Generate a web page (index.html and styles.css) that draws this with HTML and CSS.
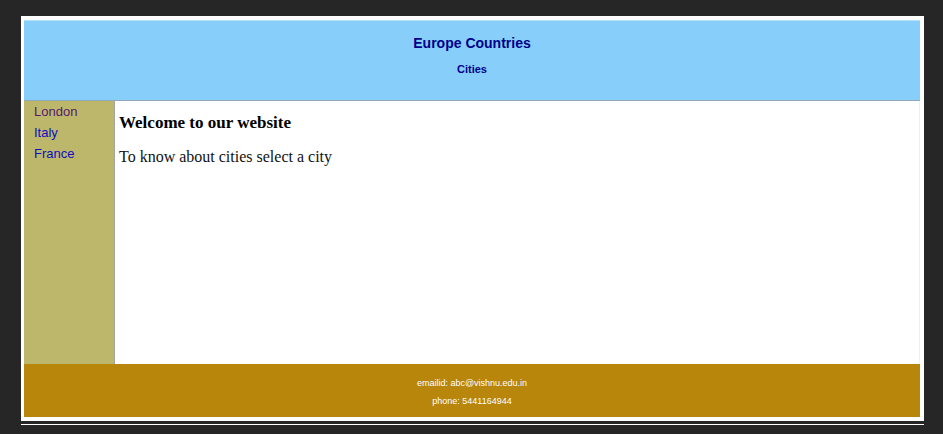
FILE: index.html
```html
<!DOCTYPE html>
<html lang="en">
<head>
<meta charset="utf-8">
<title>Europe Countries</title>
<link rel="stylesheet" href="styles.css">
</head>
<body>
<div class="page">
  <header class="banner">
    <h1 class="title">Europe Countries</h1>
    <h2 class="subtitle">Cities</h2>
  </header>
  <div class="middle">
    <nav class="menu">
      <a class="link visited" href="#london">London</a>
      <a class="link" href="#italy">Italy</a>
      <a class="link" href="#france">France</a>
    </nav>
    <main class="content">
      <h3 class="welcome">Welcome to our website</h3>
      <p class="intro">To know about cities select a city</p>
    </main>
  </div>
  <footer class="footer">
    <p class="contact">emailid: abc@vishnu.edu.in</p>
    <p class="contact">phone: 5441164944</p>
  </footer>
</div>
<hr class="rule">
</body>
</html>
```
FILE: styles.css
```css
* {
  box-sizing: border-box;
}

body {
  display: flex;
  flex-direction: column;
  min-height: 100vh;
  margin: 0;
  padding: 16px 19px 9px 21px;
  background: #262626;
  font-family: "Liberation Sans", Arial, sans-serif;
}

h1, h2, h3, p {
  margin: 0;
}

.page {
  flex: 1;
  display: flex;
  flex-direction: column;
  padding: 4px 4px 4px 3px;
  background: #fff;
}

.banner {
  padding: 14px 0 24px;
  background: #87cefa;
  border-top: 1px solid #b5e1f5;
  border-bottom: 1px solid #8fa9b8;
  color: #00008b;
  text-align: center;
}

.title {
  font-size: 14px;
  line-height: 16px;
}

.subtitle {
  margin-top: 11px;
  font-size: 11px;
  line-height: 14px;
}

.middle {
  flex: 1;
  display: flex;
  border-right: 1px solid #f0f0f0;
}

.menu {
  flex: none;
  width: 91px;
  padding-left: 10px;
  background: #bdb76b;
  border-right: 1px solid #a5a5a0;
}

.link {
  display: block;
  color: #0d0dc4;
  font-size: 13px;
  line-height: 21px;
  text-decoration: none;
}

.visited {
  color: #551a6b;
}

.content {
  padding: 12px 4px;
  font-family: "Liberation Serif", "Times New Roman", serif;
}

.welcome {
  font-size: 17px;
  line-height: 20px;
}

.intro {
  margin-top: 14px;
  font-size: 16px;
  line-height: 20px;
  color: #111;
}

.footer {
  display: flex;
  flex-direction: column;
  gap: 8px;
  padding: 14px 0 11px;
  background: #b8860b;
  color: #fff;
  text-align: center;
}

.contact {
  font-size: 9px;
  line-height: 10px;
}

.rule {
  width: 100%;
  height: 1px;
  margin: 3px 0 0;
  border: 0;
  background: #fff;
}
```
